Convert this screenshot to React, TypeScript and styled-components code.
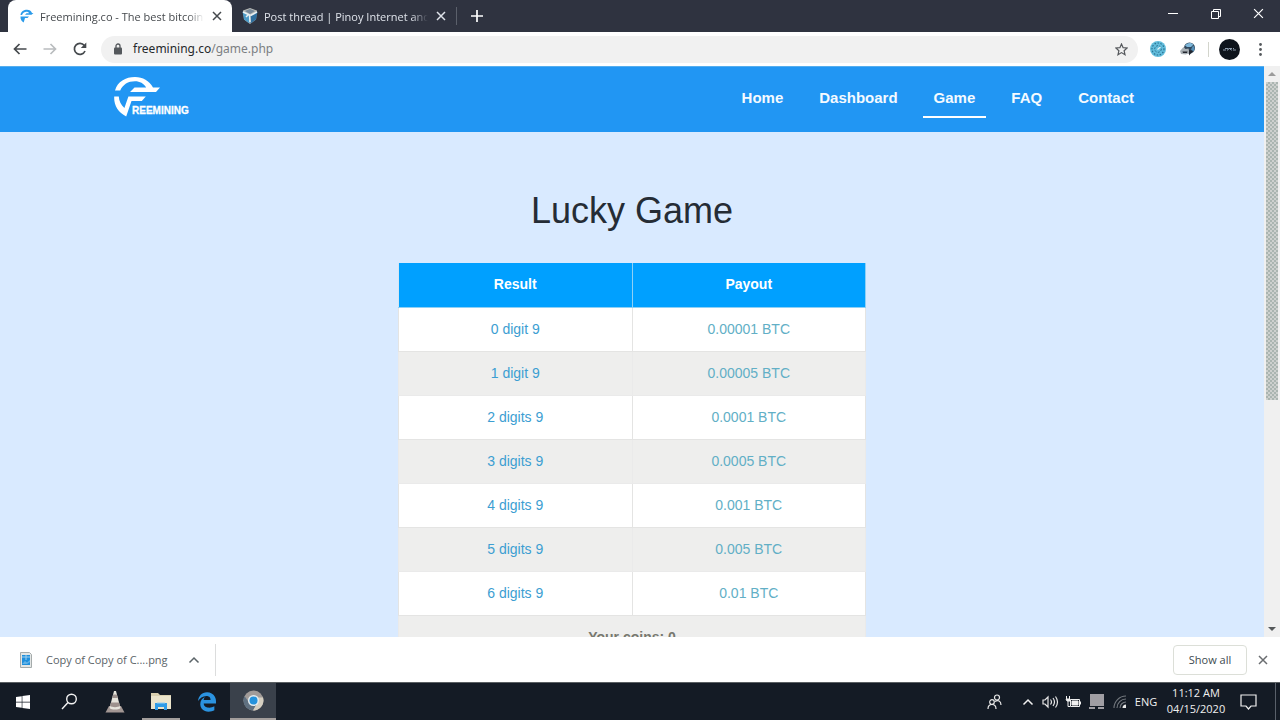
import React from 'react';
import styled, { createGlobalStyle } from 'styled-components';
import { FaWindows, FaEdgeLegacy } from 'react-icons/fa';

const GlobalStyle = createGlobalStyle`
  * { box-sizing: border-box; }
  body { margin: 0; font-family: "Open Sans", "Noto Sans", sans-serif; font-size: 11px; color: #3c4043; }
  button { font: inherit; color: inherit; background: none; border: 0; padding: 0; cursor: pointer; }
  svg { display: block; flex: none; }
`;

const Desktop = styled.div`
  height: 100vh;
  display: flex;
  flex-direction: column;
  overflow: hidden;
  background: #fff;
`;

/* ---------- Browser chrome ---------- */

const TabStrip = styled.div`
  flex: none;
  height: 32px;
  display: flex;
  align-items: stretch;
  padding-left: 8px;
  background: #2f3340;
`;

const Tab = styled.div<{ $active?: boolean }>`
  display: flex;
  align-items: center;
  gap: 6px;
  width: 224px;
  padding: 0 8px 0 10px;
  border-radius: ${p => (p.$active ? '8px 8px 0 0' : '0')};
  background: ${p => (p.$active ? '#fff' : 'transparent')};
  color: ${p => (p.$active ? '#45494d' : '#dfe3ea')};
`;

const TabTitle = styled.span`
  flex: 1;
  min-width: 0;
  overflow: hidden;
  white-space: nowrap;
  mask-image: linear-gradient(to right, #000 90%, transparent);
`;

const TabButton = styled.button`
  display: grid;
  place-items: center;
  width: 14px;
  align-self: stretch;
`;

const TabDivider = styled.span`
  width: 1px;
  height: 18px;
  align-self: center;
  background: #5b606b;
`;

const NewTab = styled(TabButton)`
  width: 40px;
  color: #fff;
`;

const WindowControls = styled.div`
  margin-left: auto;
  display: flex;
  color: #fff;
`;

const WindowButton = styled.button`
  width: 43px;
  height: 27px;
  display: grid;
  place-items: center;
`;

const Toolbar = styled.div`
  flex: none;
  height: 34px;
  display: flex;
  align-items: center;
  padding: 0 10px 0 5px;
  background: #fff;
  color: #45494d;
`;

const ToolButton = styled.button<{ $faded?: boolean }>`
  width: 30px;
  height: 28px;
  display: grid;
  place-items: center;
  color: ${p => (p.$faded ? '#b9bcbe' : '#45494d')};
`;

const AddressBar = styled.form`
  flex: 1;
  height: 27px;
  display: flex;
  align-items: center;
  gap: 10px;
  margin: 0 5px 0 6px;
  padding: 0 10px 0 12px;
  border-radius: 14px;
  background: #f1f1f1;
`;

const AddressField = styled.label`
  position: relative;
  flex: 1;
  display: flex;
  align-items: center;
  font-family: "Noto Sans", "Open Sans", sans-serif;
  font-size: 12px;
  line-height: 20px;
`;

const AddressInput = styled.input`
  width: 100%;
  height: 20px;
  padding: 0;
  border: 0;
  outline: 0;
  background: transparent;
  color: transparent;
  caret-color: #333;
  font: inherit;
`;

const AddressText = styled.span`
  position: absolute;
  inset: 0;
  color: #7b7e82;
  pointer-events: none;
  b { font-weight: 400; color: #26292c; }
`;

const ToolDivider = styled.span`
  width: 1px;
  height: 15px;
  margin: 0 5px;
  background: #d3d5cc;
`;

const Avatar = styled.button`
  width: 21px;
  height: 21px;
  margin: 0 6px 0 5px;
  border-radius: 50%;
  background: #0e141c;
  display: grid;
  place-items: center;
`;

const MenuButton = styled(ToolButton)`
  width: 28px;
  margin-right: -4px;
`;

/* ---------- Web page ---------- */

const Viewport = styled.div`
  flex: 1;
  min-height: 0;
  display: flex;
`;

const Page = styled.div`
  flex: 1;
  min-width: 0;
  overflow: hidden;
  background: #d9eaff;
  font-family: "Liberation Sans", Arial, sans-serif;
`;

const SiteHeader = styled.header`
  height: 66px;
  display: flex;
  align-items: center;
  justify-content: space-between;
  padding: 0 119px 0 114px;
  background: #2196f3;
  border-top: 1px solid #55aeee;
`;

const LogoLink = styled.a`
  padding-bottom: 6px;
`;

const SiteNav = styled.nav`
  display: flex;
  gap: 14px;
  padding-bottom: 1px;
`;

const NavLink = styled.a<{ $active?: boolean }>`
  padding: 0 11px;
  line-height: 36px;
  border-bottom: 2px solid ${p => (p.$active ? '#fff' : 'transparent')};
  color: #f4faff;
  font-size: 15px;
  font-weight: 700;
  text-decoration: none;
`;

const Content = styled.main`
  display: flex;
  flex-direction: column;
  align-items: center;
  padding-top: 57px;
`;

const Title = styled.h1`
  margin: 0 0 30px;
  font-size: 36px;
  line-height: 44px;
  font-weight: 400;
  color: #252c35;
`;

const PayoutTable = styled.table`
  width: 468px;
  table-layout: fixed;
  border-collapse: collapse;
  font-size: 14px;
  line-height: 20px;
  text-align: center;
`;

const HeadCell = styled.th`
  height: 44px;
  padding: 0 0 2px;
  border: 1px solid #8fd0f5;
  border-width: 0 1px 1px;
  border-left-color: #d5e6f2;
  background: #00a0ff;
  color: #fff;
  font-weight: 700;
`;

const Row = styled.tr<{ $striped?: boolean }>`
  background: ${p => (p.$striped ? '#eeeeed' : '#fff')};
`;

const Cell = styled.td<{ $tone: 'result' | 'payout' | 'coins'; $striped?: boolean }>`
  height: 44px;
  padding: 0 0 1px;
  border: 1px solid ${p => (p.$striped ? '#eaeaea' : '#e4e4e3')};
  color: ${p => ({ result: '#3c9ed2', payout: '#62afc6', coins: '#77786f' })[p.$tone]};
  font-weight: ${p => (p.$tone === 'coins' ? 700 : 400)};
`;

const ScrollTrack = styled.div`
  flex: none;
  width: 16px;
  display: flex;
  flex-direction: column;
  align-items: center;
  background: #f0f0f0;
`;

const ScrollButton = styled.button`
  width: 16px;
  height: 16px;
  display: grid;
  place-items: center;
`;

const ScrollGroove = styled.div`
  flex: 1;
  width: 12px;
`;

const ScrollThumb = styled.div`
  height: 59%;
  background: repeating-conic-gradient(#aab5b1 0 25%, #cdd0ce 0 50%) 0 0 / 4px 4px;
`;

/* ---------- Download shelf ---------- */

const Shelf = styled.div`
  flex: none;
  height: 45px;
  display: flex;
  align-items: center;
  padding: 0 10px 0 19px;
  background: #fff;
`;

const DownloadItem = styled.button`
  display: flex;
  align-items: center;
  height: 32px;
  padding-right: 15px;
  border-right: 1px solid #dcdddd;
  color: #5b6468;
`;

const DownloadName = styled.span`
  margin: 0 20px 0 13px;
`;

const ShowAll = styled.button`
  margin-left: auto;
  width: 74px;
  height: 30px;
  border: 1px solid #dcdfd8;
  border-radius: 4px;
  color: #3d4a50;
`;

const ShelfClose = styled.button`
  margin-left: 8px;
  width: 15px;
  height: 24px;
  display: grid;
  place-items: center;
  color: #6a6d70;
`;

/* ---------- Taskbar ---------- */

const Taskbar = styled.div`
  flex: none;
  height: 38px;
  display: flex;
  align-items: stretch;
  justify-content: space-between;
  background: #141b25;
  border-top: 1px solid #5a5f62;
  color: #f0f0f0;
`;

const TaskGroup = styled.div`
  display: flex;
  align-items: stretch;
`;

const TaskButton = styled.button<{ $state?: 'open' | 'active' }>`
  width: ${p => (p.$state === 'open' ? 38 : 46)}px;
  margin: 0 ${p => (p.$state === 'open' ? 4 : 0)}px;
  display: grid;
  place-items: center;
  border-bottom: ${p => (p.$state ? '2px solid #a39e9c' : '0')};
  background: ${p => (p.$state === 'active' ? '#3a414b' : 'transparent')};
`;

const Tray = styled.div`
  display: flex;
  align-items: center;
`;

const TrayButton = styled.button<{ $width: number }>`
  width: ${p => p.$width}px;
  height: 100%;
  display: grid;
  place-items: center;
`;

const Clock = styled.div`
  width: 70px;
  text-align: center;
  line-height: 16px;
  padding-bottom: 2px;
`;

const DesktopEdge = styled.div`
  width: 5px;
  height: 100%;
  margin-left: 10px;
  border-left: 1px solid #59606a;
`;

/* ---------- Drawings ---------- */

const Cross = ({ size = 10, width = 1.5 }: { size?: number; width?: number }) => (
  <svg width={size} height={size} viewBox="0 0 10 10" fill="none" stroke="currentColor" strokeWidth={width}>
    <path d="M1 1l8 8M9 1l-8 8" />
  </svg>
);

const Chevron = () => (
  <svg width="12" height="8" viewBox="0 0 12 8" fill="none" stroke="currentColor" strokeWidth="1.5">
    <path d="M1.500 6.500L6 2l4.500 4.500" />
  </svg>
);

const Favicon = () => (
  <svg width="16" height="14" viewBox="-2 0 16 14" fill="#2b9bea">
    <path d="M.5 6C.8 2.500 4 .8 7 .8c2.500 0 4 1.200 5 3.200h1.500l-2 1.800H5L6.500 4.200H9.200C7.500 2 3.500 2.400 2 6z" />
    <path d="M.5 7.500h8.500L7.500 9H5l-1.300 4.500C1.700 12.500.3 10.500.5 7.500z" />
  </svg>
);

const ForumIcon = () => (
  <svg width="16" height="16" viewBox="0 0 16 16">
    <path d="M8 0l7 2.500-1 9L8 16l-6-4.500-1-9z" fill="#b8b9b5" />
    <path d="M.5 3.500L7.500 8v7.500L2 11.500z" fill="#4d9bc7" />
    <path d="M15.500 3.500L8.500 8v7.500l5.500-4z" fill="#2f6f9f" />
    <path d="M8 1l5 2-5 3-5-3z" fill="#75889a" />
    <path d="M1 4l6.500 3L8 14M15 4L8.500 7.500M4 9l2-2" fill="none" stroke="#e9f1f4" strokeWidth="1.500" />
  </svg>
);

const Arrow = ({ flip }: { flip?: boolean }) => (
  <svg width="14" height="12" viewBox="0 0 14 12" fill="none" stroke="currentColor" strokeWidth="1.700">
    <path d={flip ? 'M.5 6h12M7.500 1l5 5-5 5' : 'M13.500 6h-12M6.500 1l-5 5 5 5'} />
  </svg>
);

const Reload = () => (
  <svg width="14" height="14" viewBox="0 0 14 14" fill="none" stroke="currentColor" strokeWidth="1.700">
    <path d="M12 9A5.500 5.500 0 1 1 11.300 3.500" />
    <path d="M13.300.5v5.500H7.800z" fill="currentColor" stroke="none" />
  </svg>
);

const Lock = () => (
  <svg width="10" height="12" viewBox="0 0 10 12">
    <path d="M3 5V3a2 2 0 0 1 4 0v2" fill="none" stroke="#54585c" strokeWidth="1.300" />
    <rect x="1" y="4.500" width="8" height="7" rx="1" fill="#54585c" />
  </svg>
);

const Star = () => (
  <svg width="13" height="13" viewBox="0 0 13 13" fill="none" stroke="#55585c" strokeWidth="1.200">
    <path d="M6.500 1l1.600 3.700 4 .3-3 2.700.9 4-3.500-2.100L3 11.700l.9-4-3-2.700 4-.3z" />
  </svg>
);

const SnailExtension = () => (
  <svg width="16" height="16" viewBox="0 0 16 16" fill="none">
    <circle cx="8" cy="8" r="8" fill="#62bddc" />
    <circle cx="8" cy="8" r="6" stroke="#2b7393" strokeWidth="1.200" strokeDasharray="1.500 1.500" />
    <circle cx="8" cy="8" r="3.300" stroke="#2b7393" strokeDasharray="2 1.300" />
    <path d="M7.500 8.500l3-2.500" stroke="#e4f4f9" strokeWidth="1.200" />
  </svg>
);

const GlobeExtension = () => (
  <svg width="16" height="14" viewBox="0 0 16 14">
    <circle cx="9.500" cy="6" r="5.500" fill="#31485d" />
    <path d="M5 3.500C7 .5 11 0 13.500 2.500L11 5H7z" fill="#7eb7da" />
    <path d="M13 3.500c2 1.500 2 4 .5 6l-2.500-2z" fill="#548fb8" />
    <path d="M0 9l3.500-4 2 2 3-.5 1 4L6 12.500 1 12z" fill="#a8afb4" />
    <path d="M2.500 9.500h5L7 11H3zM9 8l4 1-4 4.500z" fill="#22262e" />
  </svg>
);

const SiteLogo = () => (
  <svg width="76" height="42" viewBox="0 0 76 42" fill="#fff" role="img" aria-label="Freemining">
    <path d="M1 14.500C3.500 5.500 11.500 1 21 1c8 0 14 3.800 18 10.500h7L42 16H16l4.500-4.500h11.700C29.500 7.500 26 5.300 21 5.300c-7 0-12 3.200-14.800 9.200z" />
    <path d="M.2 20.500h4.600c.2 4.500 2.200 8.500 5.600 11.500l4-11.500h17.400l-4 4.500H17.500l-5.300 15.500C4 36.500-.3 29 .2 20.500z" />
    <text x="18" y="38" fontFamily="Liberation Sans, sans-serif" fontWeight="700" fontSize="10" stroke="#fff" strokeWidth=".3">REEMINING</text>
  </svg>
);

const DownloadIcon = () => (
  <svg width="14" height="16" viewBox="0 0 14 16">
    <path d="M1.500.5h9l2 2v13h-11z" fill="#e3e6e5" stroke="#a5abab" />
    <rect x="3" y="3" width="8" height="10" fill="#1f8fdc" />
    <path d="M3 5h8M7 3v5" stroke="#9fd0ef" />
    <path d="M3 12l3-3 2 1.500L11 8v2l-3 2z" fill="#62b2e6" />
  </svg>
);

const Magnifier = () => (
  <svg width="17" height="17" viewBox="0 0 17 17" fill="none" stroke="#f3f3f3" strokeWidth="1.400">
    <circle cx="10.500" cy="6" r="4.800" />
    <path d="M7 9.500L1 16" />
  </svg>
);

const Cone = () => (
  <svg width="20" height="22" viewBox="0 0 20 22">
    <path d="M4 15h12l3.500 6.500H.5z" fill="#a29693" />
    <path d="M9 0h2l4.500 17c-2 2-9 2-11 0z" fill="#e6e4dc" />
    <path d="M8.200 3.500h3.600l1 3.500H7.200zM6 11.500h8l1 3.500c-2 1.500-8 1.500-10 0z" fill="#9d918d" />
  </svg>
);

const Folder = () => (
  <svg width="22" height="18" viewBox="0 0 22 18">
    <path d="M1 1h7l2 2h11v14H1z" fill="#d9cfae" />
    <path d="M1 4h20v13H1z" fill="#ebe4cb" />
    <path d="M5 18v-7h12v7h-3v-3H8v3z" fill="#2f9be6" />
    <path d="M7 11h8" stroke="#93cdf0" />
  </svg>
);

const Chrome = () => (
  <svg width="21" height="21" viewBox="0 0 21 21">
    <circle cx="10.500" cy="10.500" r="10" fill="#a19b98" />
    <path d="M1.500 6A10 10 0 0 0 10 20.500l4-7-8-1z" fill="#5f7080" />
    <path d="M20 7.500a10 10 0 0 1-10 13l4.500-8-1-5z" fill="#d5cfc1" />
    <circle cx="10.500" cy="10.500" r="5.500" fill="#e4edf1" />
    <circle cx="10.500" cy="10.500" r="4" fill="#2492dc" />
  </svg>
);

const People = () => (
  <svg width="15" height="16" viewBox="0 0 15 16" fill="none" stroke="#e8e8e8" strokeWidth="1.200">
    <circle cx="10" cy="3.500" r="2.500" />
    <circle cx="5" cy="8" r="2.300" />
    <path d="M1 15c0-6 8-6 8 0M8 7.500c3-2 6-.5 6 3.500" />
  </svg>
);

const Speaker = () => (
  <svg width="17" height="14" viewBox="0 0 17 14" fill="none" stroke="#e8e8e8" strokeWidth="1.200">
    <path d="M1 5h2l3-3v10L3 9H1zM8.500 4.500q2 2.500 0 5M11 3q3 4 0 8M13.500 1.500q4 5.500 0 11" />
  </svg>
);

const Battery = () => (
  <svg width="17" height="12" viewBox="0 0 17 12" fill="none" stroke="#f0f0f0">
    <path d="M5.500 3.500h9v7h-9z" />
    <path d="M7 5h6v4H7z" fill="#f0f0f0" />
    <path d="M15.500 5.500v3M1.500 0v3M4.500 0v3M3 4v6.500h2" />
    <path d="M1 3h4v2H2z" fill="#f0f0f0" />
  </svg>
);

const Monitor = () => (
  <svg width="16" height="15" viewBox="0 0 16 15" fill="#a09ea3">
    <path d="M1 0h14v12H1zM0 13h6v2H0zM9 13h6v2H9z" />
  </svg>
);

const Wifi = () => (
  <svg width="14" height="14" viewBox="0 0 14 14" fill="none" stroke="#74797f" strokeWidth="1.100">
    <path d="M1 13A12 12 0 0 1 13 1M4 13a9 9 0 0 1 9-9M7 13a6 6 0 0 1 6-6" />
    <path d="M9.500 13a3.500 3.500 0 0 1 3.500-3.500V13z" fill="#e8e8e8" stroke="none" />
  </svg>
);

const Notice = () => (
  <svg width="17" height="16" viewBox="0 0 17 16" fill="none" stroke="#f0f0f0" strokeWidth="1.200">
    <path d="M1 1h15v11h-5l-2.500 3L6 12H1z" />
  </svg>
);

const payouts = [
  ['0 digit 9', '0.00001 BTC'],
  ['1 digit 9', '0.00005 BTC'],
  ['2 digits 9', '0.0001 BTC'],
  ['3 digits 9', '0.0005 BTC'],
  ['4 digits 9', '0.001 BTC'],
  ['5 digits 9', '0.005 BTC'],
  ['6 digits 9', '0.01 BTC'],
];

const links = ['Home', 'Dashboard', 'Game', 'FAQ', 'Contact'];

export default function App() {
  return (
    <Desktop>
      <GlobalStyle />
      <TabStrip>
        <Tab $active>
          <Favicon />
          <TabTitle>Freemining.co - The best bitcoin</TabTitle>
          <TabButton aria-label="Close tab"><Cross /></TabButton>
        </Tab>
        <Tab>
          <ForumIcon />
          <TabTitle>Post thread | Pinoy Internet and T</TabTitle>
          <TabButton aria-label="Close tab"><Cross /></TabButton>
        </Tab>
        <TabDivider />
        <NewTab aria-label="New tab">
          <svg width="12" height="12" viewBox="0 0 12 12" stroke="currentColor" strokeWidth="1.700"><path d="M6 0v12M0 6h12" /></svg>
        </NewTab>
        <WindowControls>
          <WindowButton aria-label="Minimize">
            <svg width="10" height="2" viewBox="0 0 10 2"><path d="M0 0h10v1H0z" fill="currentColor" /></svg>
          </WindowButton>
          <WindowButton aria-label="Restore">
            <svg width="10" height="10" viewBox="0 0 10 10" fill="none" stroke="currentColor"><path d="M.5 2.500h7v7h-7zM2.500 2V.5h7v7H8" /></svg>
          </WindowButton>
          <WindowButton aria-label="Close"><Cross size={11} width={1.1} /></WindowButton>
        </WindowControls>
      </TabStrip>

      <Toolbar>
        <ToolButton aria-label="Back"><Arrow /></ToolButton>
        <ToolButton aria-label="Forward" $faded><Arrow flip /></ToolButton>
        <ToolButton aria-label="Reload"><Reload /></ToolButton>
        <AddressBar>
          <Lock />
          <AddressField>
            <AddressInput aria-label="Address" defaultValue="freemining.co/game.php" />
            <AddressText aria-hidden="true"><b>freemining.co</b>/game.php</AddressText>
          </AddressField>
          <Star />
        </AddressBar>
        <ToolButton aria-label="Extension"><SnailExtension /></ToolButton>
        <ToolButton aria-label="Downloads extension"><GlobeExtension /></ToolButton>
        <ToolDivider />
        <Avatar aria-label="Profile">
          <svg width="15" height="5" viewBox="0 0 15 5" fill="none" stroke="#8d9cad"><path d="M1 3h5l1-2 2 2h5M3 1.500h9" strokeDasharray="3 1" /></svg>
        </Avatar>
        <MenuButton aria-label="Menu">
          <svg width="3" height="13" viewBox="0 0 3 13" fill="#55595d"><circle cx="1.500" cy="1.500" r="1.400" /><circle cx="1.500" cy="6.500" r="1.400" /><circle cx="1.500" cy="11.500" r="1.400" /></svg>
        </MenuButton>
      </Toolbar>

      <Viewport>
        <Page>
          <SiteHeader>
            <LogoLink href="#"><SiteLogo /></LogoLink>
            <SiteNav>
              {links.map(name => (
                <NavLink key={name} href="#" $active={name === 'Game'}>{name}</NavLink>
              ))}
            </SiteNav>
          </SiteHeader>
          <Content>
            <Title>Lucky Game</Title>
            <PayoutTable>
              <thead>
                <tr><HeadCell>Result</HeadCell><HeadCell>Payout</HeadCell></tr>
              </thead>
              <tbody>
                {payouts.map(([result, payout], i) => (
                  <Row key={result} $striped={i % 2 === 1}>
                    <Cell $tone="result" $striped={i % 2 === 1}>{result}</Cell>
                    <Cell $tone="payout" $striped={i % 2 === 1}>{payout}</Cell>
                  </Row>
                ))}
                <Row $striped><Cell $tone="coins" $striped colSpan={2}>Your coins: 0</Cell></Row>
              </tbody>
            </PayoutTable>
          </Content>
        </Page>
        <ScrollTrack>
          <ScrollButton aria-label="Scroll up">
            <svg width="8" height="4" viewBox="0 0 8 4" fill="#9b9b9b"><path d="M4 0l4 4H0z" /></svg>
          </ScrollButton>
          <ScrollGroove><ScrollThumb /></ScrollGroove>
          <ScrollButton aria-label="Scroll down">
            <svg width="8" height="4" viewBox="0 0 8 4" fill="#55585a"><path d="M0 0h8L4 4z" /></svg>
          </ScrollButton>
        </ScrollTrack>
      </Viewport>

      <Shelf>
        <DownloadItem>
          <DownloadIcon />
          <DownloadName>Copy of Copy of C....png</DownloadName>
          <Chevron />
        </DownloadItem>
        <ShowAll>Show all</ShowAll>
        <ShelfClose aria-label="Close downloads"><Cross /></ShelfClose>
      </Shelf>

      <Taskbar>
        <TaskGroup>
          <TaskButton aria-label="Start"><FaWindows size={16} color="#fff" /></TaskButton>
          <TaskButton aria-label="Search"><Magnifier /></TaskButton>
          <TaskButton aria-label="Media player"><Cone /></TaskButton>
          <TaskButton aria-label="File explorer" $state="open"><Folder /></TaskButton>
          <TaskButton aria-label="Edge"><FaEdgeLegacy size={20} color="#2b93e0" /></TaskButton>
          <TaskButton aria-label="Chrome" $state="active"><Chrome /></TaskButton>
        </TaskGroup>
        <Tray>
          <TrayButton $width={46} aria-label="People"><People /></TrayButton>
          <TrayButton $width={22} aria-label="Hidden icons"><Chevron /></TrayButton>
          <TrayButton $width={23} aria-label="Volume"><Speaker /></TrayButton>
          <TrayButton $width={23} aria-label="Battery"><Battery /></TrayButton>
          <TrayButton $width={23} aria-label="Display"><Monitor /></TrayButton>
          <TrayButton $width={23} aria-label="Network"><Wifi /></TrayButton>
          <TrayButton $width={30} aria-label="Language">ENG</TrayButton>
          <Clock>11:12 AM<br />04/15/2020</Clock>
          <TrayButton $width={34} aria-label="Notifications"><Notice /></TrayButton>
          <DesktopEdge />
        </Tray>
      </Taskbar>
    </Desktop>
  );
}
